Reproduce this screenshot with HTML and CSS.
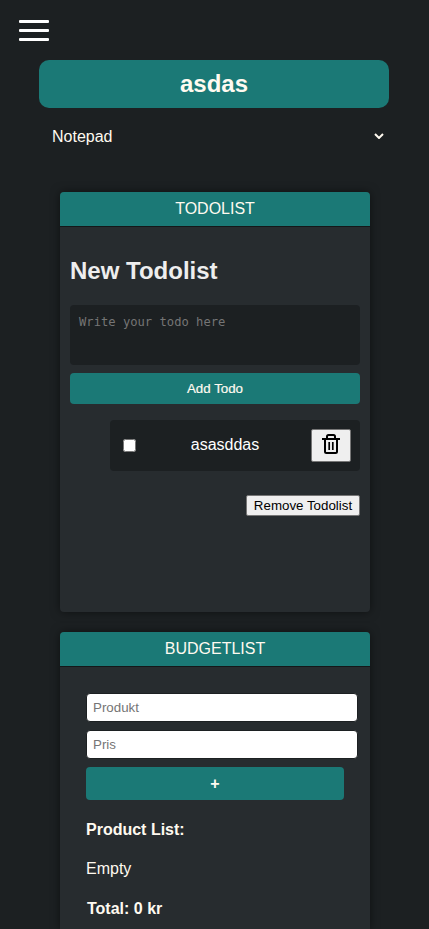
FILE: index.html
```html
<!DOCTYPE html>
<html lang="en">
<head>
<meta charset="utf-8">
<title>asdas</title>
<link rel="stylesheet" href="styles.css">
</head>
<body>
<nav class="nav"><div class="burger"><span></span><span></span><span></span></div></nav>
<h2 class="project">asdas</h2>
<div class="picker"><span>Notepad</span>
<svg width="10" height="6" viewBox="0 0 10 6"><path d="M1 1l4 4 4-4" fill="none" stroke="#fffaf0" stroke-width="2"/></svg></div>
<main>
<section class="card todo">
<header class="card-head">TODOLIST</header>
<div class="todo-body">
<h2 class="title">New Todolist</h2>
<textarea class="text" placeholder="Write your todo here"></textarea>
<button class="btn add">Add Todo</button>
<div class="item">
<input class="check" type="checkbox">
<span class="item-name">asasddas</span>
<button class="trash" aria-label="Delete"><svg width="20" height="22" viewBox="0 0 20 22" fill="none" stroke="#000" stroke-width="2"><path d="M1 6h18M6 5V3.500q0-1.500 1.500-1.500h5q1.500 0 1.500 1.500V5M4 6v12.500q0 1.500 1.500 1.500h9q1.500 0 1.500-1.500V6"/><path d="M8.200 9v8M11.800 9v8" stroke-width="1.700"/></svg></button>
</div>
<button class="remove">Remove Todolist</button>
</div>
</section>
<section class="card budget">
<header class="card-head">BUDGETLIST</header>
<div class="budget-body">
<input class="field" placeholder="Produkt">
<input class="field" placeholder="Pris">
<button class="btn plus">+</button>
<p class="line"><b>Product List:</b></p>
<p class="line">Empty</p>
<p class="line total"><b>Total: 0 kr</b></p>
</div>
</section>
</main>
</body>
</html>
```
FILE: styles.css
```css
* { box-sizing: border-box; }
html { overflow: hidden; }
body {
  margin: 0;
  height: 929px;
  overflow: hidden;
  background: #1c2022;
  color: #fffaf0;
  font: 16px/18px "Liberation Sans", Arial, sans-serif;
}
button, input { font: 13.333px/15px "Liberation Sans", Arial, sans-serif; }
.nav { height: 60px; padding: 20px 19px 0; }
.burger { display: grid; gap: 6px; width: 30px; }
.burger span { height: 3px; background: #fff; border-radius: 1px; }
.project {
  width: 350px;
  height: 48px;
  margin: 0 0 0 39px;
  border-radius: 10px;
  background: #1b7976;
  text-align: center;
  font-size: 24px;
  line-height: 48px;
}
.picker {
  display: flex;
  align-items: center;
  justify-content: space-between;
  width: 332px;
  height: 20px;
  margin: 18px 0 46px 52px;
}
.picker span { padding-top: 2px; }
.card {
  width: 310px;
  height: 420px;
  margin: 0 0 20px 60px;
  overflow: hidden;
  border-radius: 4px;
  background: #272c2f;
  box-shadow: 0 0 10px rgba(0, 0, 0, .5);
}
.budget {
  height: 297px;
  margin-bottom: 0;
  border-radius: 4px 4px 0 0;
}
.card-head {
  height: 35px;
  border-bottom: 1px solid #141719;
  background: #1b7976;
  text-align: center;
  line-height: 33px;
}
.todo-body { display: flex; flex-direction: column; padding: 30px 10px 0; }
.title { margin: 0 0 20px; font-size: 24px; line-height: 28px; color: #eee; }
.text {
  height: 60px;
  margin: 0 0 8px;
  padding: 10px 9px;
  border: 0;
  border-radius: 4px;
  resize: none;
  background: #1c2022;
  color: #fffaf0;
  font: 12.17px/15px "DejaVu Sans Mono", monospace;
}
.text::placeholder, .field::placeholder { color: #757575; }
.btn { padding: 0; border: 0; border-radius: 4px; background: #1b7976; color: #fffaf0; }
.add { height: 31px; -webkit-text-stroke: .2px #fffaf0; }
.item {
  display: flex;
  align-items: center;
  justify-content: space-between;
  height: 51px;
  margin: 16px 0 24px 40px;
  padding: 0 9px 0 13px;
  border-radius: 4px;
  background: #1c2022;
  color: #fff;
}
.item-name { padding: 0 0 2px 3px; }
.check { width: 13px; height: 13px; margin: 0; }
.trash {
  display: grid;
  place-items: center;
  width: 40px;
  height: 33px;
  padding: 0 0 3px;
  border: 1px solid #767676;
  border-radius: 2px;
  background: #efefef;
}
.remove {
  align-self: flex-end;
  width: 114px;
  height: 21px;
  padding: 0;
  border: 1px solid #767676;
  border-radius: 2px;
  background: #efefef;
  color: #000;
}
.budget-body { padding: 26px 0 0 26px; }
.field {
  display: block;
  width: 272px;
  height: 29px;
  margin: 0 0 8px;
  padding: 0 6px;
  border: 1px solid #1c2022;
  border-radius: 4px;
  background: #fff;
}
.plus { display: block; width: 258px; height: 33px; padding-bottom: 1px; margin-bottom: 21px; font-size: 16px; font-weight: bold; }
.line { margin: 0 0 21px; }
.total { margin: 22px 0 0 1px; }
```
